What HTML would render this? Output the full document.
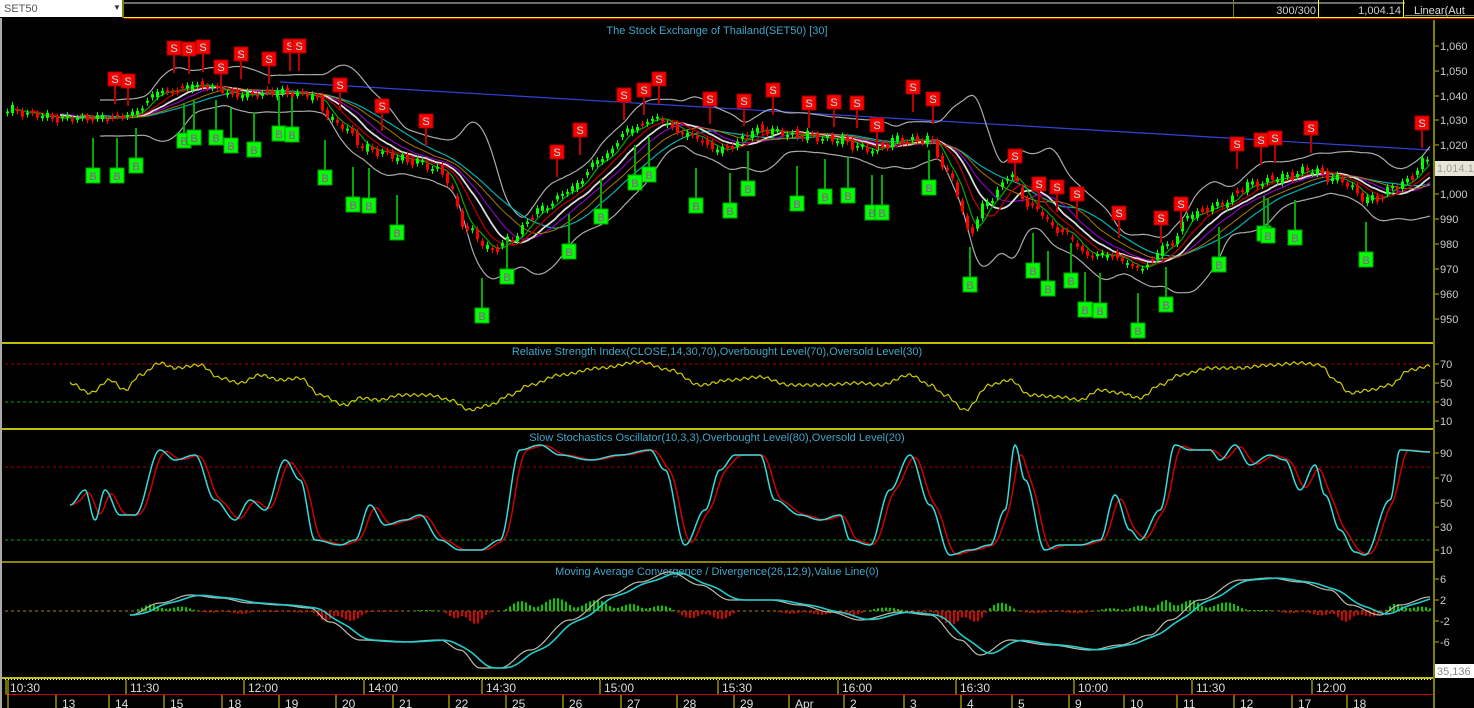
<!DOCTYPE html>
<html><head><meta charset="utf-8">
<style>
html,body{margin:0;padding:0;background:#000;width:1474px;height:708px;overflow:hidden;font-family:"Liberation Sans",sans-serif}
svg{display:block}
</style></head><body>
<svg id="c" width="1474" height="708" xmlns="http://www.w3.org/2000/svg" font-family="Liberation Sans, sans-serif">
<rect width="1474" height="708" fill="#000"/>
<rect x="0" y="0" width="1474" height="18" fill="#000"/>
<rect x="0" y="0" width="122" height="17" fill="#fff"/>
<text x="4" y="12" font-size="11" fill="#555">SET50</text>
<text x="113" y="10" font-size="8" fill="#333">▼</text>
<rect x="122" y="0" width="2" height="18" fill="#808000"/>
<line x1="124" y1="18.5" x2="1474" y2="18.5" stroke="#c00" stroke-width="1"/>
<line x1="124" y1="17.5" x2="1474" y2="17.5" stroke="#ff0" stroke-width="1"/>
<line x1="124" y1="3" x2="1474" y2="3" stroke="#ddd" stroke-width="1"/>
<rect x="1233" y="0" width="1" height="17" fill="#808000"/>
<rect x="1318" y="0" width="1" height="17" fill="#ff0"/>
<rect x="1403" y="0" width="1" height="17" fill="#ff0"/>
<text x="1316" y="14" font-size="11" fill="#ccc" text-anchor="end">300/300</text>
<text x="1401" y="14" font-size="11" fill="#ccc" text-anchor="end">1,004.14</text>
<rect x="1405" y="1" width="69" height="16" fill="#000"/>
<text x="1414" y="14" font-size="11" fill="#ddd">Linear(Aut</text>
<line x1="1405" y1="15.5" x2="1474" y2="15.5" stroke="#888"/>
<rect x="0" y="18" width="2" height="690" fill="#aaa"/>
<text x="717" y="34" font-size="11" fill="#3fa6c8" text-anchor="middle">The Stock Exchange of Thailand(SET50) [30]</text>
<line x1="2" y1="343" x2="1434" y2="343" stroke="#ff0" stroke-width="1.5"/>
<line x1="2" y1="429" x2="1434" y2="429" stroke="#ff0" stroke-width="1.5"/>
<line x1="2" y1="562" x2="1434" y2="562" stroke="#bbb000" stroke-width="1.5"/>
<line x1="2" y1="678" x2="1434" y2="678" stroke="#ff0" stroke-width="1.5"/>
<text x="717" y="355" font-size="11" fill="#3fa6c8" text-anchor="middle">Relative Strength Index(CLOSE,14,30,70),Overbought Level(70),Oversold Level(30)</text>
<text x="717" y="441" font-size="11" fill="#3fa6c8" text-anchor="middle">Slow Stochastics Oscillator(10,3,3),Overbought Level(80),Oversold Level(20)</text>
<text x="717" y="575" font-size="11" fill="#3fa6c8" text-anchor="middle">Moving Average Convergence / Divergence(26,12,9),Value Line(0)</text>
<line x1="5" y1="364" x2="1434" y2="364" stroke="#a00" stroke-dasharray="3,3"/>
<line x1="5" y1="402" x2="1434" y2="402" stroke="#0a0" stroke-dasharray="3,3"/>
<line x1="5" y1="467" x2="1434" y2="467" stroke="#a00" stroke-dasharray="3,3"/>
<line x1="5" y1="540" x2="1434" y2="540" stroke="#0a0" stroke-dasharray="3,3"/>
<line x1="5" y1="611" x2="1434" y2="611" stroke="#aa8800" stroke-dasharray="3,3"/>
<rect x="1433" y="20" width="2" height="688" fill="#808000"/>
<g font-size="11" fill="#ccc" id="ax"></g>
<rect x="1435" y="161" width="39" height="15" fill="#e6e6d8"/>
<text x="1437" y="172" font-size="11" fill="#999">1,014.1</text>
<rect x="1435" y="664" width="39" height="14" fill="#fff"/>
<text x="1437" y="675" font-size="11" fill="#888">35,136</text>
<rect x="5" y="679" width="1428" height="29" fill="#000"/>
<line x1="5" y1="694.5" x2="1433" y2="694.5" stroke="#c00"/>
<line x1="5" y1="679.5" x2="1433" y2="679.5" stroke="#fff" stroke-dasharray="1,2"/>
<g id="xa" font-size="12" fill="#ddd"></g>
<g id="chart"></g>
</svg>
<script>
var NS="http://www.w3.org/2000/svg";
var C=document.getElementById('chart');
function el(t,a,p){var e=document.createElementNS(NS,t);for(var k in a)e.setAttribute(k,a[k]);(p||C).appendChild(e);return e;}
function interp(k){var o={};for(var i=0;i<k.length-1;i++){var a=k[i],b=k[i+1];for(var x=a[0];x<=b[0];x++){var t=(x-a[0])/(b[0]-a[0]);var s=(1-Math.cos(t*Math.PI))/2;o[x]=a[1]+(b[1]-a[1])*s;}}return o;}
function pl(o,x0,x1,col,w,step){var pts=[];for(var x=x0;x<=x1;x+=(step||1)){if(o[x]!=null)pts.push(x+','+o[x].toFixed(1));}el('polyline',{points:pts.join(' '),fill:'none',stroke:col,'stroke-width':w||1});}
function ma(o,x0,x1,n){var r={};for(var x=x0;x<=x1;x++){var s=0,c=0;for(var j=x-n;j<=x;j++){if(o[j]!=null){s+=o[j];c++;}}r[x]=s/c;}return r;}
function noise(x){return Math.sin(x*0.9)*2+Math.sin(x*2.3)*1.5+Math.sin(x*0.37)*2.5;}
var PK=[[5,110],[60,118],[100,118],[130,115],[160,92],[200,85],[240,95],[280,92],[310,95],[340,125],[370,150],[410,160],[440,170],[470,230],[490,250],[510,240],[540,210],[570,190],[600,160],[630,130],[655,118],[690,135],[720,150],[760,130],[800,135],[840,140],[870,150],[900,140],[930,140],[950,175],[970,230],[990,200],[1010,175],[1030,205],[1060,230],[1090,255],[1110,255],[1140,268],[1170,245],[1190,215],[1220,205],[1250,185],[1280,178],[1310,170],[1340,180],[1370,200],[1400,185],[1430,160]];
var P=interp(PK);var PN={};for(var x=5;x<=1430;x++)PN[x]=P[x]+noise(x);
var m1=ma(PN,5,1430,15),m2=ma(PN,5,1430,30),m3=ma(PN,5,1430,60),m4=ma(PN,5,1430,100),m5=ma(PN,5,1430,45);
var up={},dn={};for(var x=5;x<=1430;x++){var s=0,c=0;for(var j=x-40;j<=x;j++)if(PN[j]!=null){s+=Math.pow(PN[j]-m5[x],2);c++;}var sd=Math.sqrt(s/c)*2.4+12;up[x]=m5[x]-sd;dn[x]=m5[x]+sd;}
var ups=ma(up,5,1430,10),dns=ma(dn,5,1430,10);
el('line',{x1:280,y1:82,x2:1430,y2:150,stroke:'#3344dd','stroke-width':1.2});
pl(ups,100,1430,'#aaa',1.2);pl(dns,100,1430,'#aaa',1.2);
pl(m4,100,1430,'#00b0b0',1.2);pl(m3,60,1430,'#9900cc',1.1);pl(m5,60,1430,'#ddd',1.8);pl(ma(PN,5,1430,80),80,1430,'#aa7700',1);
pl(m2,30,1430,'#aa0000',1.4);pl(m1,15,1430,'#00aa00',1.2);
for(var x=6;x<=1428;x+=5){var a=PN[x-2]||PN[x],b=PN[x+2]||PN[x];var col=b<a?'#00ff00':'#ff0000';var t=Math.min(a,b),h=Math.max(2,Math.abs(a-b));el('line',{x1:x+1.5,y1:t-3,x2:x+1.5,y2:t+h+3,stroke:col});el('rect',{x:x,y:t,width:3,height:h,fill:col});}
var S=[[108,72],[121,74],[167,41],[182,42],[196,40],[214,60],[234,47],[262,52],[283,39],[292,39],[333,78],[375,99],[419,114],[550,145],[573,123],[617,88],[637,83],[652,72],[703,92],[737,94],[766,83],[802,96],[827,95],[850,96],[870,118],[906,80],[926,92],[1008,149],[1032,177],[1050,180],[1070,187],[1112,206],[1154,211],[1174,197],[1230,137],[1254,133],[1268,131],[1304,121],[1415,116]];
var B=[[86,168],[110,168],[129,158],[177,133],[187,130],[209,130],[224,138],[247,142],[272,126],[285,127],[318,170],[346,197],[362,198],[390,225],[475,308],[500,269],[562,244],[594,209],[628,175],[642,167],[689,198],[723,203],[741,181],[790,196],[818,189],[841,188],[865,205],[875,205],[922,180],[963,277],[1026,263],[1041,281],[1064,273],[1078,302],[1093,303],[1131,323],[1159,297],[1212,257],[1257,226],[1261,228],[1288,230],[1359,252]];
S.forEach(function(s){el('line',{x1:s[0]+7,y1:s[1]+14,x2:s[0]+7,y2:s[1]+32,stroke:'#b00','stroke-width':2});el('rect',{x:s[0],y:s[1],width:14,height:14,fill:'#f00',stroke:'#a00'});var t=el('text',{x:s[0]+7,y:s[1]+11,'font-size':11,fill:'#9ee','text-anchor':'middle'});t.textContent='S';});
B.forEach(function(s){el('line',{x1:s[0]+7,y1:s[1]-30,x2:s[0]+7,y2:s[1],stroke:'#0a0','stroke-width':2});el('rect',{x:s[0],y:s[1],width:14,height:15,fill:'#0f0',stroke:'#0a0'});var t=el('text',{x:s[0]+7,y:s[1]+12,'font-size':11,fill:'#a4a','text-anchor':'middle'});t.textContent='B';});
var RK=[[70,383],[90,393],[110,380],[125,390],[140,375],[160,363],[175,368],[200,365],[220,378],[240,383],[260,375],[280,380],[300,378],[320,395],[345,405],[360,398],[380,400],[400,395],[430,395],[450,400],[470,410],[490,405],[510,395],[530,385],[560,375],[600,368],[640,362],[670,370],[700,385],[730,380],[760,377],[790,385],[820,385],[860,383],[880,385],[910,375],[930,385],[945,395],[965,410],[990,385],[1010,380],[1030,395],[1060,397],[1080,400],[1100,390],[1120,393],[1140,398],[1160,385],[1180,375],[1210,368],[1240,368],[1270,365],[1300,363],[1320,365],[1335,380],[1350,393],[1370,390],[1390,385],[1410,370],[1430,366]];
var R=interp(RK);for(var x in R)R[x]+=Math.sin(x*0.8)*1.5;pl(R,70,1430,'#cccc00',1.2,2);
var SK=[[70,505],[85,490],[95,520],[105,490],[120,515],[135,515],[160,450],[175,460],[195,455],[215,500],[235,520],[250,500],[265,510],[285,460],[300,480],[315,540],[340,545],[355,540],[370,505],[385,525],[405,520],[420,515],[440,540],[460,550],[480,550],[500,540],[520,450],[540,445],[560,455],[590,460],[620,455],[650,450],[665,470],[685,545],[705,510],[720,470],[735,455],[760,455],[775,500],[800,515],[820,520],[840,515],[850,540],[870,545],[890,490],[910,455],[930,505],[950,555],[970,550],[990,545],[1005,510],[1015,445],[1025,480],[1045,550],[1060,545],[1080,545],[1100,540],[1115,495],[1130,530],[1140,540],[1160,510],[1175,445],[1190,450],[1210,450],[1220,460],[1235,445],[1250,465],[1270,455],[1285,460],[1300,490],[1315,465],[1325,495],[1340,530],[1355,552],[1365,555],[1390,500],[1400,450],[1430,452]];
var SC=interp(SK);var SR={};for(var x=70;x<=1430;x++){var s=0,c=0;for(var j=x-10;j<=x;j++)if(SC[j]!=null){s+=SC[j];c++;}SR[x]=s/c;}
pl(SR,70,1430,'#cc0000',1.5);pl(SC,70,1430,'#33dddd',1.5);
var MK=[[130,615],[160,603],[190,595],[220,598],[250,603],[280,605],[310,608],[330,622],[360,640],[400,642],[440,640],[460,650],[480,668],[500,668],[530,650],[570,620],[610,595],[640,582],[670,572],[700,585],[730,600],[770,600],[800,605],[830,612],[860,620],[900,612],[930,615],[960,640],[980,655],[1010,640],[1050,645],[1090,650],[1120,645],[1150,635],[1170,620],[1200,600],[1240,580],[1270,578],[1300,582],[1330,590],[1350,605],[1380,615],[1400,605],[1430,597]];
var MW=interp(MK);var MC={};for(var x=130;x<=1430;x++){var s=0,c=0;for(var j=x-18;j<=x;j++)if(MW[j]!=null){s+=MW[j];c++;}MC[x]=s/c;}
for(var x=130;x<=1430;x+=4){var d=(MC[x]-MW[x])*1.3;if(Math.abs(d)<0.5)continue;el('line',{x1:x,y1:611,x2:x,y2:611-d,stroke:(d>0?'#00cc00':'#dd0000'),'stroke-width':2});}
pl(MW,130,1430,'#bbbbaa',1.2);pl(MC,130,1430,'#22cccc',1.6);
var AX=document.getElementById('ax');
function lab(v,y){var t=el('text',{x:1440,y:y+4},AX);t.textContent=v;el('line',{x1:1435,y1:y,x2:1439,y2:y,stroke:'#bb0'},AX);}
[['1,060',46],['1,050',71],['1,040',96],['1,030',120],['1,020',145],['1,000',194],['990',219],['980',244],['970',269],['960',294],['950',319]].forEach(function(a){lab(a[0],a[1]);});
[['70',364],['50',383],['30',402],['10',421]].forEach(function(a){lab(a[0],a[1]);});
[['90',453],['70',478],['50',503],['30',527],['10',550]].forEach(function(a){lab(a[0],a[1]);});
[['6',579],['2',600],['-2',621],['-6',642]].forEach(function(a){lab(a[0],a[1]);});
var XA=document.getElementById('xa');
[['10:30',10],['11:30',130],['12:00',248],['14:00',368],['14:30',486],['15:00',604],['15:30',722],['16:00',842],['16:30',960],['10:00',1078],['11:30',1196],['12:00',1316]].forEach(function(a){el('line',{x1:a[1]-4,y1:680,x2:a[1]-4,y2:694,stroke:'#dd0'},XA);var t=el('text',{x:a[1],y:692},XA);t.textContent=a[0];});
[['13',62],['14',115],['15',170],['18',228],['19',285],['20',342],['21',399],['22',455],['25',512],['26',569],['27',627],['28',683],['29',740],['Apr',795],['2',850],['3',910],['4',967],['5',1018],['9',1075],['10',1130],['11',1183],['12',1240],['17',1298],['18',1353]].forEach(function(a){el('line',{x1:a[1]-6,y1:695,x2:a[1]-6,y2:708,stroke:'#dd0'},XA);var t=el('text',{x:a[1],y:708},XA);t.textContent=a[0];});
el('line',{x1:8,y1:680,x2:8,y2:708,stroke:'#dd0'},XA);
</script>
</body></html>
